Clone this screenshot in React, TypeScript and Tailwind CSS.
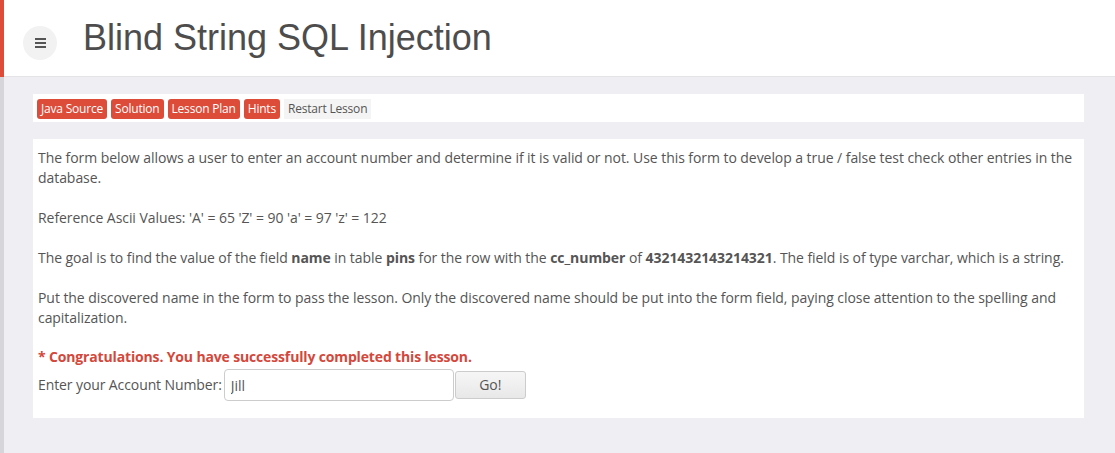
import React from "react";

const buttons = ["Java Source", "Solution", "Lesson Plan", "Hints"];

export default function App() {
  const [account, setAccount] = React.useState("Jill");

  return (
    <div
      className="flex min-h-[453px] bg-[#efeff3] text-[14px] tracking-[-0.06px] text-[#555]"
      style={{ fontFamily: '"Open Sans", "Liberation Sans", sans-serif' }}>
      <div className="flex w-[4px] flex-col">
        <div className="h-[77px] bg-[#dd4b39]" />
        <div className="flex-1 bg-[#d5d5da]" />
      </div>
      <div className="flex-1">
        <header className="flex h-[77px] items-center border-b border-[#e4e4e8] bg-white">
          <button className="ml-[19px] mt-[10px] flex h-[34px] w-[34px] items-center justify-center rounded-full bg-[#f2f2f2]">
            <span className="flex flex-col gap-[2px]">
              <span className="block h-[2px] w-[11px] bg-[#555]" />
              <span className="block h-[2px] w-[11px] bg-[#555]" />
              <span className="block h-[2px] w-[11px] bg-[#555]" />
            </span>
          </button>
          <h1
            className="ml-[26px] text-[36px] leading-none tracking-normal text-[#4d4d4d]"
            style={{ fontFamily: '"Liberation Sans", Arial, sans-serif' }}>
            Blind String SQL Injection
          </h1>
        </header>

        <div className="pl-[29px] pr-[31px] pt-[17px]">
          <div className="flex h-[28px] items-center gap-[4px] bg-white px-[4px] pt-[2px]">
            {buttons.map((b) => (
              <span
                key={b}
                className="rounded-[3px] bg-[#dd4b39] px-[4px] text-[12px] leading-[20px] tracking-[-0.2px] text-white">
                {b}
              </span>
            ))}
            <span className="bg-[#f4f4f4] px-[4px] text-[12px] leading-[20px] tracking-[-0.2px] text-[#555]">
              Restart Lesson
            </span>
          </div>

          <div className="mt-[17px] bg-white px-[5px] pb-[17px] pt-[9px] leading-[20px]">
            <p className="mb-[20px]">
              The form below allows a user to enter an account number and
              determine if it is valid or not. Use this form to develop a true /
              false test check other entries in the database.
            </p>
            <p className="mb-[20px]">
              Reference Ascii Values: 'A' = 65 'Z' = 90 'a' = 97 'z' = 122
            </p>
            <p className="mb-[20px]">
              The goal is to find the value of the field <b>name</b> in table{" "}
              <b>pins</b> for the row with the <b>cc_number</b> of{" "}
              <b>4321432143214321</b>. The field is of type varchar, which is a
              string.
            </p>
            <p className="mb-[19px]">
              Put the discovered name in the form to pass the lesson. Only the
              discovered name should be put into the form field, paying close
              attention to the spelling and capitalization.
            </p>
            <p className="font-bold tracking-[-0.15px] text-[#d4473b]">
              * Congratulations. You have successfully completed this lesson.
            </p>
            <form
              className="mt-[2px] flex items-center"
              onSubmit={(e) => e.preventDefault()}>
              <label className="mr-[2px] tracking-[-0.1px]">
                Enter your Account Number:
              </label>
              <input
                value={account}
                onChange={(e) => setAccount(e.target.value)}
                className="h-[32px] w-[230px] rounded-[4px] border border-[#ccc] px-[6px] text-[14px] text-[#555] outline-none"
              />
              <button
                type="submit"
                className="ml-[1px] h-[28px] w-[71px] rounded-[3px] border border-[#ccc] bg-gradient-to-b from-[#f6f6f6] to-[#e8e8e8] text-[14px] text-[#555]">
                Go!
              </button>
            </form>
          </div>
        </div>
      </div>
    </div>
  );
}
